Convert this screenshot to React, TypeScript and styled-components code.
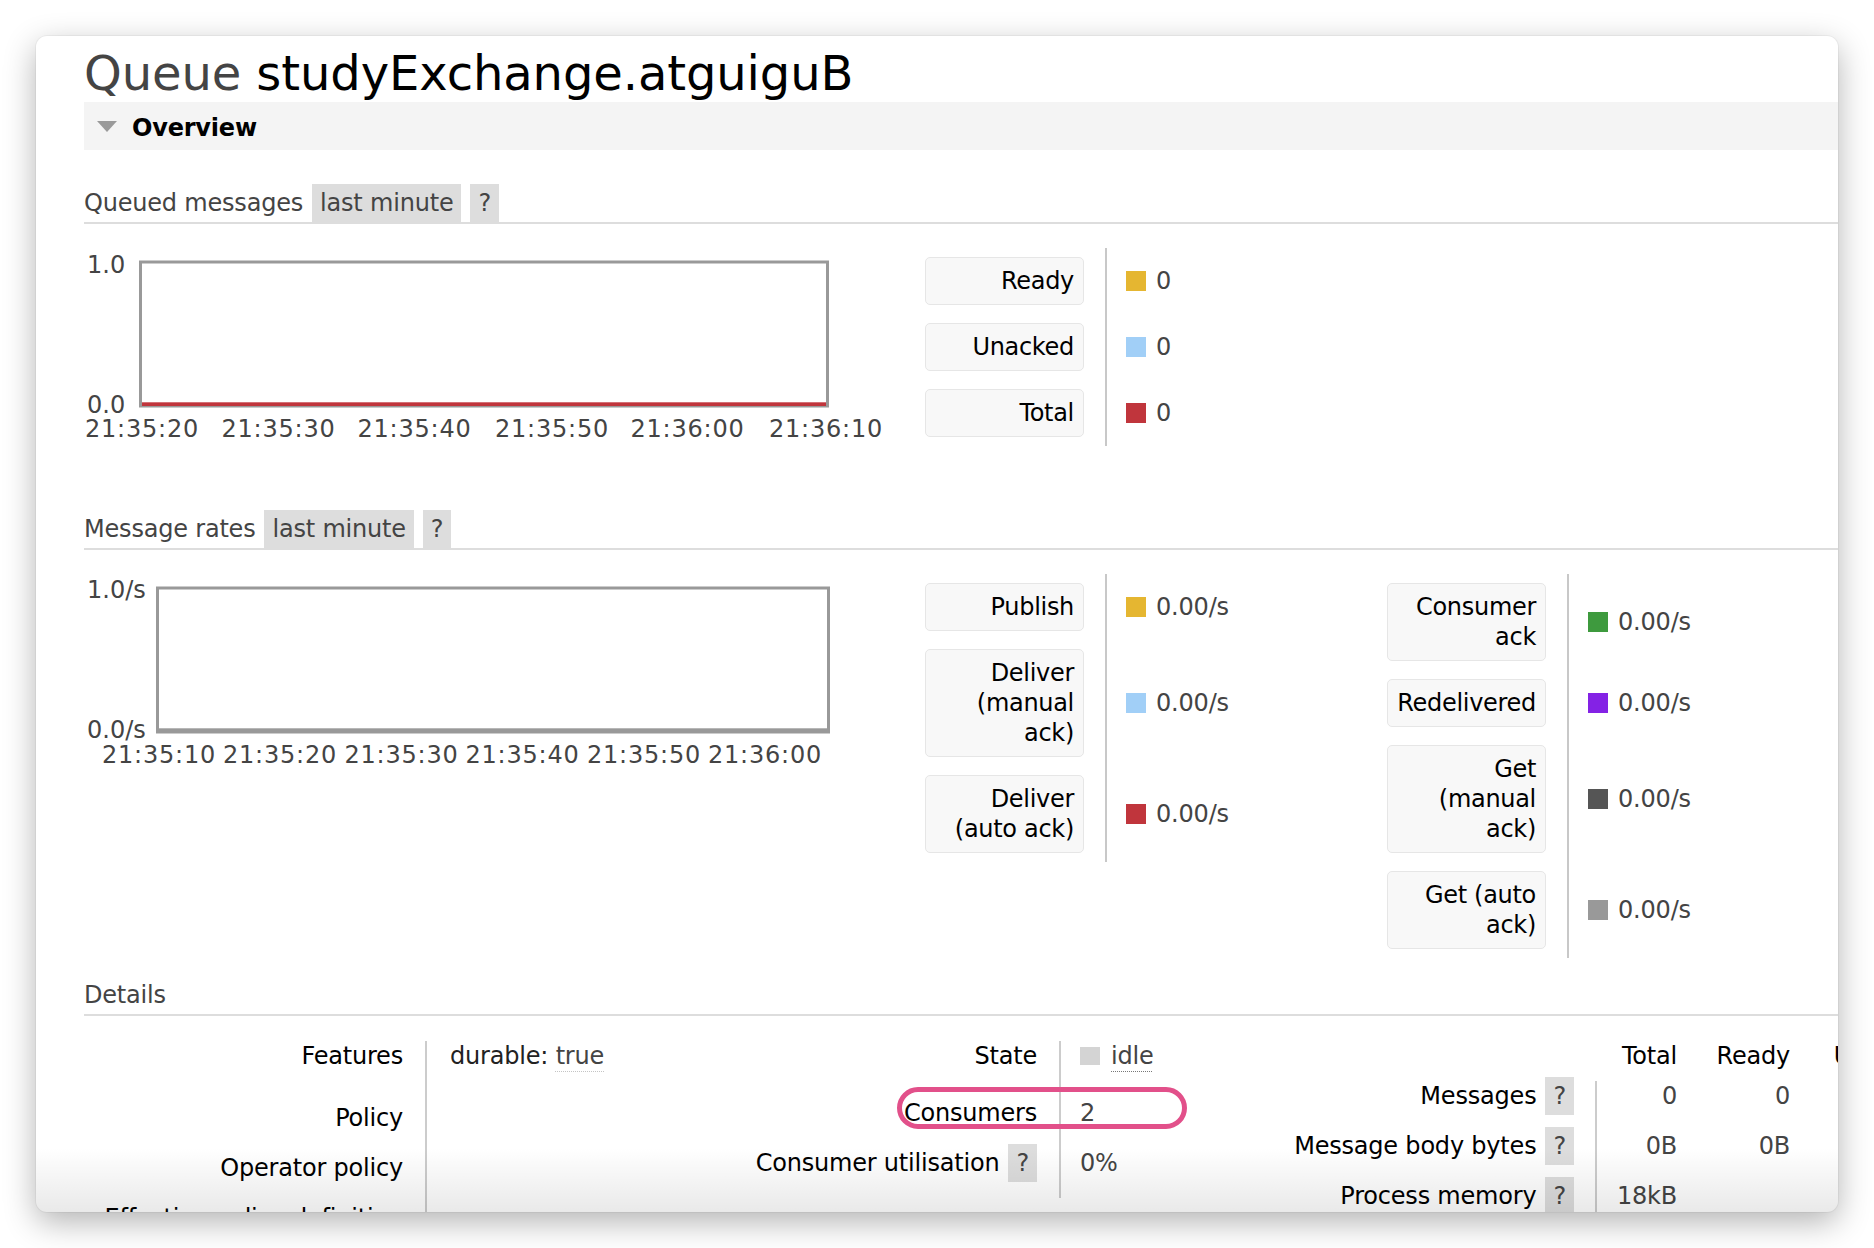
import React from "react";
import styled, { createGlobalStyle } from "styled-components";

const GlobalStyle = createGlobalStyle`
  html, body { margin: 0; padding: 0; background: #ffffff; }
  body {
    width: 1874px;
    height: 1248px;
    overflow: hidden;
    font-family: "DejaVu Sans", Verdana, sans-serif;
    font-size: 24px;
    letter-spacing: -0.2px;
    color: #444;
  }
  * { box-sizing: border-box; }
`;

const Page = styled.div`
  width: 1874px;
  height: 1248px;
  padding: 36px;
`;

const Window = styled.div`
  position: relative;
  width: 1802px;
  height: 1176px;
  background: #fff;
  border-radius: 11px;
  overflow: hidden;
  box-shadow: 0 10px 32px rgba(0, 0, 0, 0.3), 0 0 0 1px rgba(0, 0, 0, 0.04);
`;

const BottomFade = styled.div`
  position: absolute;
  left: 0;
  right: 0;
  bottom: 0;
  height: 64px;
  pointer-events: none;
  background: linear-gradient(to bottom, rgba(0, 0, 0, 0), rgba(0, 0, 0, 0.085));
`;

const Content = styled.main`
  width: 1900px;
  padding-left: 48px;
`;

const Title = styled.h1`
  margin: 0;
  padding-top: 9px;
  font-size: 48px;
  line-height: 57px;
  font-weight: normal;
  letter-spacing: -0.1px;
  color: #444;
`;

const TitleName = styled.span`
  color: #000;
`;

const Band = styled.div`
  display: flex;
  align-items: center;
  gap: 15px;
  height: 48px;
  padding-left: 13px;
  background: #f4f4f4;
`;

const BandLabel = styled.span`
  margin-top: 4px;
  font-weight: bold;
  line-height: 30px;
  color: #000;
`;

const SectionHeader = styled.div<{ $top: number }>`
  display: flex;
  align-items: flex-end;
  gap: 9px;
  margin-top: ${(p) => p.$top}px;
  border-bottom: 2px solid #ddd;
`;

const HeaderTitle = styled.h2`
  margin: 0;
  font-size: 24px;
  font-weight: normal;
  line-height: 38px;
  color: #444;
`;

const HeaderPill = styled.span`
  padding: 0 8px;
  line-height: 38px;
  background: #ddd;
  color: #444;
`;

const SectionBody = styled.div`
  display: flex;
  align-items: flex-start;
  padding-top: 24px;
`;

const ChartSlot = styled.div`
  width: 841px;
  flex: none;
`;

const ChartSvg = styled.svg`
  display: block;
  text {
    font-family: "DejaVu Sans", Verdana, sans-serif;
    font-size: 24px;
    fill: #444;
    letter-spacing: 0.8px;
  }
`;

const Legend = styled.div<{ $valueWidth: number }>`
  display: grid;
  grid-template-columns: 180px ${(p) => p.$valueWidth}px;
  flex: none;
`;

const LegendKeyCell = styled.div`
  padding: 9px 21px 9px 0;
`;

const LegendKey = styled.div`
  width: 159px;
  padding: 8px 9px 8px 6px;
  line-height: 30px;
  text-align: right;
  letter-spacing: -0.3px;
  color: #000;
  background: #f8f8f8;
  border: 1px solid #e6e6e6;
  border-radius: 5px;
`;

const LegendValueCell = styled.div`
  display: flex;
  align-items: center;
  gap: 10px;
  padding-left: 19px;
  border-left: 2px solid #c8c8c8;
  white-space: nowrap;
  line-height: 30px;
`;

const Swatch = styled.span<{ $color: string }>`
  width: 20px;
  height: 20px;
  flex: none;
  background: ${(p) => p.$color};
`;

const DetailsBody = styled.div`
  position: relative;
  display: flex;
  padding-top: 25px;
`;

const FactsTable = styled.div<{ $cols: string; $rows: string; $width?: number }>`
  display: grid;
  grid-template-columns: ${(p) => p.$cols};
  grid-template-rows: ${(p) => p.$rows};
  ${(p) => (p.$width ? `width: ${p.$width}px; flex: none;` : "")}
`;

const FactLabel = styled.div<{ $pr: number }>`
  padding-right: ${(p) => p.$pr}px;
  text-align: right;
  line-height: 30px;
  color: #000;
  white-space: nowrap;
`;

const FactValue = styled.div<{ $pl?: number; $sep?: boolean; $right?: boolean; $head?: boolean }>`
  padding-left: ${(p) => p.$pl ?? 0}px;
  border-left: ${(p) => (p.$sep ? "2px solid #ccc" : "2px solid transparent")};
  text-align: ${(p) => (p.$right ? "right" : "left")};
  line-height: 30px;
  white-space: nowrap;
  color: ${(p) => (p.$head ? "#000" : "#444")};
`;

const Help = styled.span`
  display: inline-block;
  margin: -4px 0 -4px 9px;
  padding: 0 8px;
  line-height: 38px;
  vertical-align: top;
  background: #ddd;
  color: #444;
`;

const FeatureKey = styled.span`
  color: #222;
`;

const Abbr = styled.span<{ $line: string }>`
  text-decoration: underline dotted ${(p) => p.$line};
  text-decoration-thickness: 1px;
  text-underline-offset: 7px;
`;

const StateValue = styled.span`
  display: inline-flex;
  align-items: center;
  gap: 11px;
`;

const StateDot = styled.span`
  width: 20px;
  height: 18px;
  background: #d4d4d4;
`;

const Highlight = styled.div`
  position: absolute;
  left: 813px;
  top: 71px;
  width: 290px;
  height: 42px;
  border: 5px solid #e2508a;
  border-radius: 21px;
  pointer-events: none;
`;

type Tick = { x: number; label: string };

function Chart(props: {
  frameLeft: number;
  frameRight: number;
  topLabel: string;
  topY: number;
  bottomLabel: string;
  bottomY: number;
  ticks: Tick[];
  zeroColor: string;
}) {
  const { frameLeft, frameRight, topLabel, topY, bottomLabel, bottomY, ticks, zeroColor } = props;
  const w = frameRight - frameLeft;
  return (
    <ChartSvg width={841} height={200} viewBox="0 0 841 200">
      <rect x={frameLeft + 1.5} y={14} width={w - 3} height={144} fill="#fff" stroke="#999" strokeWidth={3} />
      <rect x={frameLeft + 3} y={154.3} width={w - 6} height={3.7} fill={zeroColor} />
      <text x={3} y={topY + 8.7} style={{ letterSpacing: "0px" }}>{topLabel}</text>
      <text x={3} y={bottomY + 8.7} style={{ letterSpacing: "0px" }}>{bottomLabel}</text>
      {ticks.map((t) => (
        <text key={t.label} x={t.x} y={189} textAnchor="middle">
          {t.label}
        </text>
      ))}
    </ChartSvg>
  );
}

type LegendItem = { label: string; color: string; value: string };

function LegendTable({ items, valueWidth }: { items: LegendItem[]; valueWidth: number }) {
  return (
    <Legend $valueWidth={valueWidth}>
      {items.map((it) => (
        <React.Fragment key={it.label}>
          <LegendKeyCell>
            <LegendKey>{it.label}</LegendKey>
          </LegendKeyCell>
          <LegendValueCell>
            <Swatch $color={it.color} />
            <span>{it.value}</span>
          </LegendValueCell>
        </React.Fragment>
      ))}
    </Legend>
  );
}

const YELLOW = "#e5b631";
const BLUE = "#a1cff7";
const RED = "#c0353c";

const queued: LegendItem[] = [
  { label: "Ready", color: YELLOW, value: "0" },
  { label: "Unacked", color: BLUE, value: "0" },
  { label: "Total", color: RED, value: "0" },
];

const ratesLeft: LegendItem[] = [
  { label: "Publish", color: YELLOW, value: "0.00/s" },
  { label: "Deliver (manual ack)", color: BLUE, value: "0.00/s" },
  { label: "Deliver (auto ack)", color: RED, value: "0.00/s" },
];

const ratesRight: LegendItem[] = [
  { label: "Consumer ack", color: "#3e9a3e", value: "0.00/s" },
  { label: "Redelivered", color: "#8422e5", value: "0.00/s" },
  { label: "Get (manual ack)", color: "#555555", value: "0.00/s" },
  { label: "Get (auto ack)", color: "#999999", value: "0.00/s" },
];

function Triangle() {
  return (
    <svg width="20" height="11" viewBox="0 0 20 11">
      <polygon points="0,0 20,0 10,11" fill="#9a9a9a" />
    </svg>
  );
}

export default function App() {
  return (
    <>
      <GlobalStyle />
      <Page>
        <Window>
          <Content>
            <Title>
              Queue <TitleName>studyExchange.atguiguB</TitleName>
            </Title>
            <Band>
              <Triangle />
              <BandLabel>Overview</BandLabel>
            </Band>

            <SectionHeader $top={34}>
              <HeaderTitle>Queued messages</HeaderTitle>
              <HeaderPill>last minute</HeaderPill>
              <HeaderPill>?</HeaderPill>
            </SectionHeader>
            <SectionBody>
              <ChartSlot>
                <Chart
                  frameLeft={55}
                  frameRight={745}
                  topLabel="1.0"
                  topY={16}
                  bottomLabel="0.0"
                  bottomY={156}
                  zeroColor={RED}
                  ticks={[
                    { x: 58, label: "21:35:20" },
                    { x: 194.5, label: "21:35:30" },
                    { x: 330.5, label: "21:35:40" },
                    { x: 468, label: "21:35:50" },
                    { x: 603.5, label: "21:36:00" },
                    { x: 742, label: "21:36:10" },
                  ]}
                />
              </ChartSlot>
              <LegendTable items={queued} valueWidth={300} />
            </SectionBody>

            <SectionHeader $top={62}>
              <HeaderTitle>Message rates</HeaderTitle>
              <HeaderPill>last minute</HeaderPill>
              <HeaderPill>?</HeaderPill>
            </SectionHeader>
            <SectionBody>
              <ChartSlot>
                <Chart
                  frameLeft={72}
                  frameRight={746}
                  topLabel="1.0/s"
                  topY={15}
                  bottomLabel="0.0/s"
                  bottomY={155}
                  zeroColor="#999"
                  ticks={[
                    { x: 75, label: "21:35:10" },
                    { x: 196, label: "21:35:20" },
                    { x: 317.5, label: "21:35:30" },
                    { x: 438.5, label: "21:35:40" },
                    { x: 560, label: "21:35:50" },
                    { x: 681, label: "21:36:00" },
                  ]}
                />
              </ChartSlot>
              <LegendTable items={ratesLeft} valueWidth={282} />
              <LegendTable items={ratesRight} valueWidth={300} />
            </SectionBody>

            <SectionHeader $top={18}>
              <HeaderTitle>Details</HeaderTitle>
            </SectionHeader>
            <DetailsBody>
              <FactsTable $cols="341px 275px" $rows="62px 50px 50px 50px" $width={616}>
                <FactLabel $pr={22}>Features</FactLabel>
                <FactValue $sep $pl={23}>
                  <FeatureKey>durable:</FeatureKey> <Abbr $line="#c4c4c4">true</Abbr>
                </FactValue>
                <FactLabel $pr={22}>Policy</FactLabel>
                <FactValue $sep $pl={23} />
                <FactLabel $pr={22}>Operator policy</FactLabel>
                <FactValue $sep $pl={23} />
                <FactLabel $pr={22}>Effective policy definition</FactLabel>
                <FactValue $sep $pl={23} />
              </FactsTable>

              <FactsTable $cols="359px 141px" $rows="57px 50px 50px" $width={500}>
                <FactLabel $pr={22}>State</FactLabel>
                <FactValue $sep $pl={19}>
                  <StateValue>
                    <StateDot />
                    <Abbr $line="#777">idle</Abbr>
                  </StateValue>
                </FactValue>
                <FactLabel $pr={22}>Consumers</FactLabel>
                <FactValue $sep $pl={19}>2</FactValue>
                <FactLabel $pr={22}>
                  Consumer utilisation<Help>?</Help>
                </FactLabel>
                <FactValue $sep $pl={19}>0%</FactValue>
              </FactsTable>

              <FactsTable $cols="395px 82px 113px 146px" $rows="40px 50px 50px 50px">
                <FactLabel $pr={21} />
                <FactValue $right $head>Total</FactValue>
                <FactValue $right $head>Ready</FactValue>
                <FactValue $right $head>Unacked</FactValue>

                <FactLabel $pr={21}>
                  Messages<Help>?</Help>
                </FactLabel>
                <FactValue $sep $right>0</FactValue>
                <FactValue $right>0</FactValue>
                <FactValue $right>0</FactValue>

                <FactLabel $pr={21}>
                  Message body bytes<Help>?</Help>
                </FactLabel>
                <FactValue $sep $right>0B</FactValue>
                <FactValue $right>0B</FactValue>
                <FactValue $right>0B</FactValue>

                <FactLabel $pr={21}>
                  Process memory<Help>?</Help>
                </FactLabel>
                <FactValue $sep $right>18kB</FactValue>
                <FactValue $right />
                <FactValue $right />
              </FactsTable>

              <Highlight />
            </DetailsBody>
          </Content>
          <BottomFade />
        </Window>
      </Page>
    </>
  );
}
